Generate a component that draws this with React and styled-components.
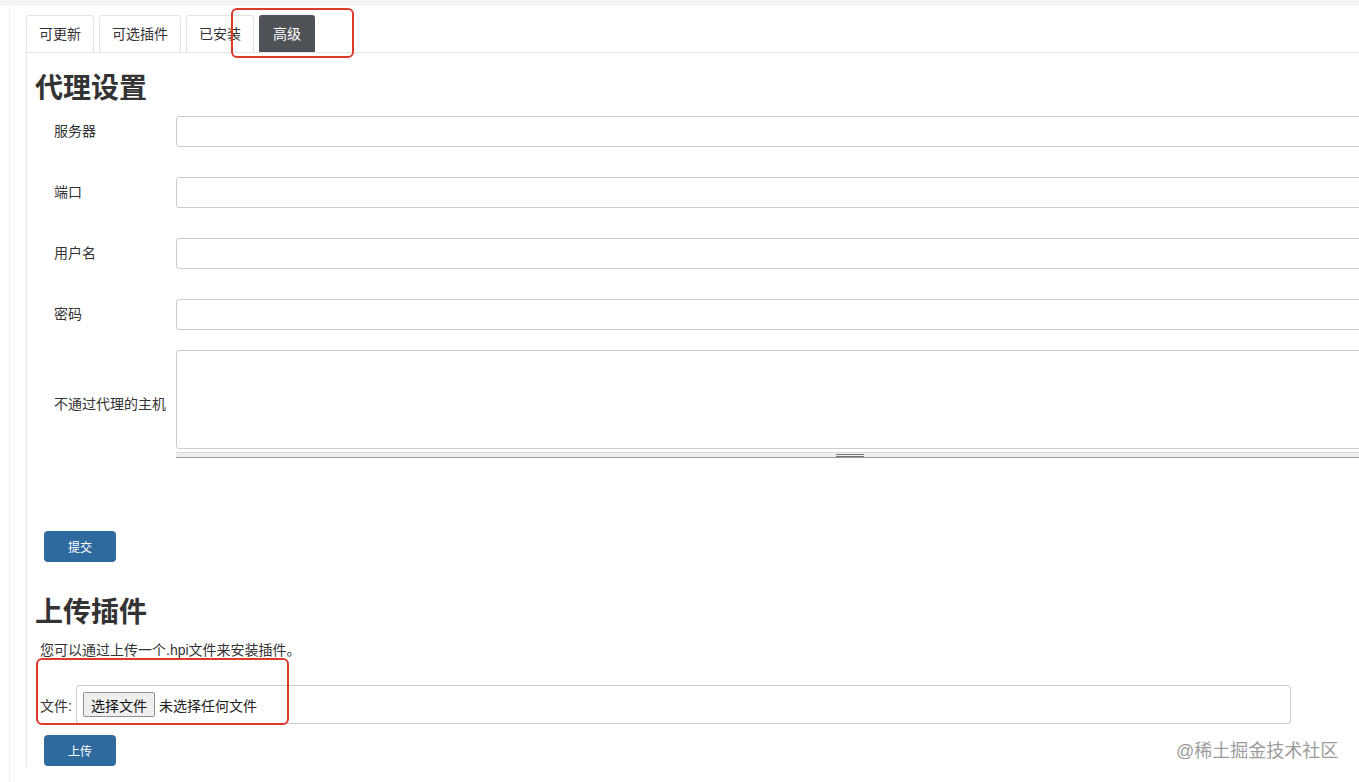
import React from "react";
import styled, { createGlobalStyle } from "styled-components";

const Global = createGlobalStyle`
  html, body {
    margin: 0;
    padding: 0;
    overflow: hidden;
    background: #fff;
  }
  body {
    font-family: "Liberation Sans", "Noto Sans CJK SC", sans-serif;
    color: #333;
  }
  * { box-sizing: border-box; }
`;

const Shell = styled.div`
  position: relative;
  width: 1359px;
  height: 782px;
  overflow: hidden;
`;

const TopBand = styled.div`
  height: 6px;
  background: #f4f4f4;
`;

const Page = styled.div`
  margin-left: 9px;
  border-left: 1px solid #eeeeee;
  padding: 9px 0 0 16px;
  min-height: 776px;
`;

const Tabs = styled.div`
  display: flex;
  gap: 5px;
`;

const Tab = styled.div`
  height: 37px;
  padding: 0 ${(p) => (p.$active ? 13 : 12)}px 3px;
  display: flex;
  align-items: center;
  font-size: 14px;
  border: 1px solid ${(p) => (p.$active ? "#4f5358" : "#e4e4e4")};
  border-bottom: none;
  border-radius: 3px 3px 0 0;
  background: ${(p) => (p.$active ? "#4f5358" : "#fff")};
  color: ${(p) => (p.$active ? "#fff" : "#333")};
`;

const Pane = styled.div`
  border-top: 1px solid #e6e6e6;
  border-left: 1px solid #e6e6e6;
  padding-left: 8px;
  width: 1600px;
`;

const Heading = styled.h2`
  margin: ${(p) => p.$mt}px 0 0 0;
  font-size: 28px;
  line-height: 34px;
  font-weight: 700;
  color: #333;
`;

const Form = styled.div`
  margin-top: 10px;
  padding-left: 19px;
`;

const Row = styled.div`
  display: flex;
  align-items: center;
  margin-top: ${(p) => p.$mt || 0}px;
`;

const Label = styled.div`
  width: 122px;
  flex: none;
  font-size: 14px;
  color: #333;
  padding-bottom: 3px;
`;

const TextInput = styled.input`
  width: 1348px;
  height: 31px;
  flex: none;
  border: 1px solid #cccccc;
  border-radius: 3px;
  background: #fff;
  padding: 4px 8px;
  font-size: 14px;
  outline: none;
`;

const AreaCol = styled.div`
  display: flex;
  flex-direction: column;
  width: 1348px;
  flex: none;
`;

const TextArea = styled.textarea`
  width: 100%;
  height: 99px;
  border: 1px solid #cccccc;
  border-radius: 3px;
  resize: none;
  padding: 4px 8px;
  outline: none;
  display: block;
`;

const Grip = styled.div`
  margin-top: 3px;
  height: 6px;
  background: #eeeeee;
  border-top: 1px solid #d8d8d8;
  border-bottom: 1px solid #999999;
  display: flex;
  justify-content: center;
  align-items: center;
`;

const GripHandle = styled.div`
  width: 28px;
  height: 3px;
  border-top: 1px solid #777;
  border-bottom: 1px solid #777;
`;

const Button = styled.button`
  width: 72px;
  height: 31px;
  margin: ${(p) => p.$mt}px 0 0 9px;
  border: none;
  border-radius: 4px;
  background: #2f6a9f;
  color: #fff;
  font-family: inherit;
  font-size: 12px;
  display: block;
  padding: 0;
`;

const Desc = styled.p`
  margin: 11px 0 0 5px;
  font-size: 14px;
  line-height: 18px;
  color: #333;
`;

const FileRow = styled.div`
  display: flex;
  align-items: center;
  margin: 26px 0 0 5px;
  gap: 4px;
  font-size: 14px;
`;

const FileBox = styled.div`
  width: 1215px;
  height: 39px;
  border: 1px solid #cccccc;
  border-radius: 3px;
  padding: 6px;
  display: flex;
  align-items: center;
  gap: 4px;
`;

const FileButton = styled.span`
  width: 72px;
  height: 25px;
  border: 1px solid #8f8f8f;
  border-radius: 2px;
  background: #efefef;
  display: flex;
  align-items: center;
  justify-content: center;
  font-size: 14px;
  color: #111;
`;

const FileText = styled.span`
  font-size: 14px;
  color: #222;
`;

const RedBox = styled.div`
  position: absolute;
  left: ${(p) => p.$x}px;
  top: ${(p) => p.$y}px;
  width: ${(p) => p.$w}px;
  height: ${(p) => p.$h}px;
  border: 2px solid #dc3b2a;
  border-radius: 6px;
  pointer-events: none;
`;

const Watermark = styled.div`
  position: absolute;
  left: 1176px;
  top: 736px;
  font-size: 18px;
  color: #9c9c9c;
  text-shadow: 0 0 1px #fff;
`;

export default function App() {
  return (
    <Shell>
      <Global />
      <TopBand />
      <Page>
        <Tabs>
          <Tab>可更新</Tab>
          <Tab>可选插件</Tab>
          <Tab>已安装</Tab>
          <Tab $active>高级</Tab>
        </Tabs>
        <Pane>
          <Heading $mt={19}>代理设置</Heading>
          <Form>
            <Row>
              <Label>服务器</Label>
              <TextInput />
            </Row>
            <Row $mt={30}>
              <Label>端口</Label>
              <TextInput />
            </Row>
            <Row $mt={30}>
              <Label>用户名</Label>
              <TextInput />
            </Row>
            <Row $mt={30}>
              <Label>密码</Label>
              <TextInput type="password" />
            </Row>
            <Row $mt={20}>
              <Label>不通过代理的主机</Label>
              <AreaCol>
                <TextArea />
                <Grip>
                  <GripHandle />
                </Grip>
              </AreaCol>
            </Row>
          </Form>
          <Button $mt={73}>提交</Button>
          <Heading $mt={34}>上传插件</Heading>
          <Desc>您可以通过上传一个.hpi文件来安装插件。</Desc>
          <FileRow>
            <span>文件:</span>
            <FileBox>
              <FileButton>选择文件</FileButton>
              <FileText>未选择任何文件</FileText>
            </FileBox>
          </FileRow>
          <Button $mt={11}>上传</Button>
        </Pane>
      </Page>
      <RedBox $x={231} $y={8} $w={123} $h={50} />
      <RedBox $x={36} $y={658} $w={253} $h={67} />
      <Watermark>@稀土掘金技术社区</Watermark>
    </Shell>
  );
}
